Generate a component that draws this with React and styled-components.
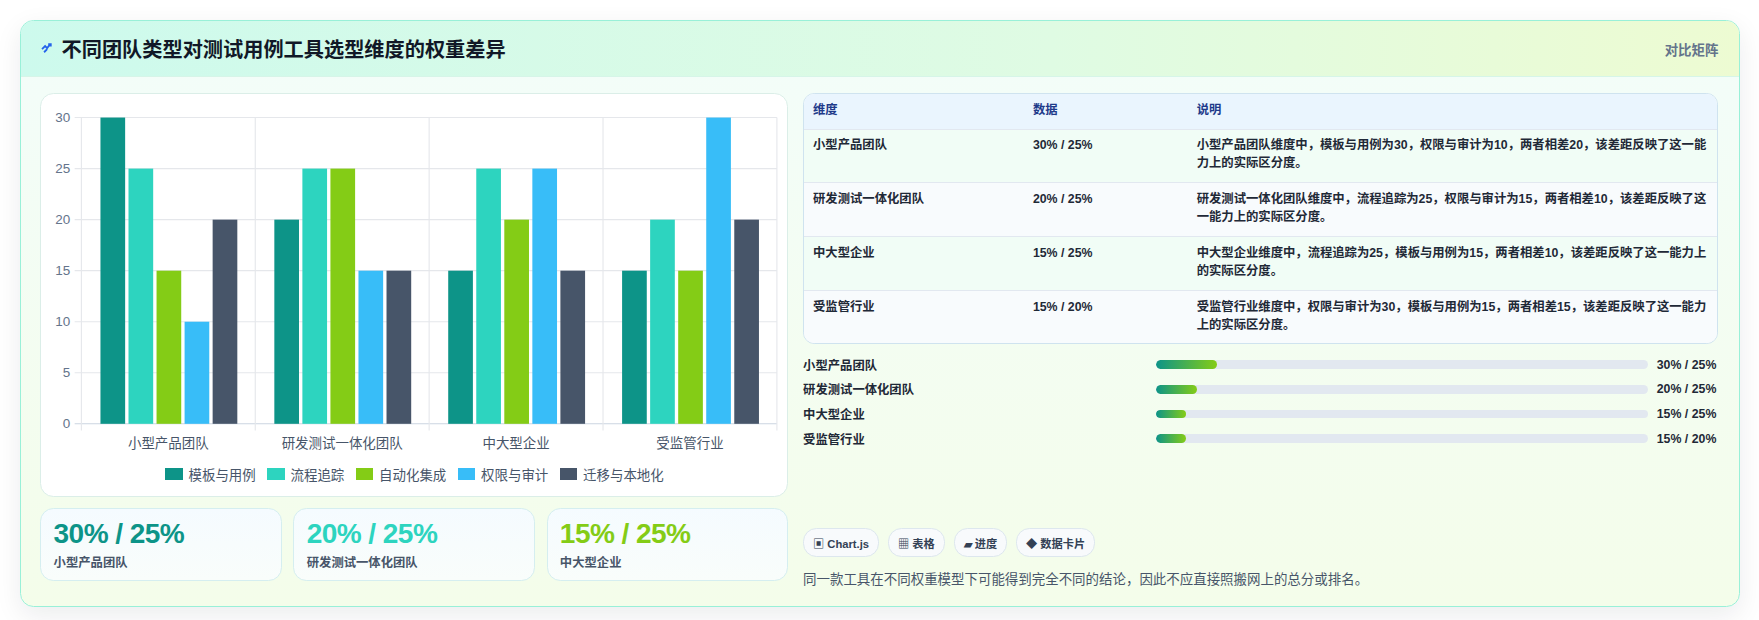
import React from 'react';
import styled, { createGlobalStyle } from 'styled-components';

const Global = createGlobalStyle`
  body { margin: 0; background: #fff; font-family: "Liberation Sans", "Noto Sans CJK SC", sans-serif; }
`;

const groups = ['小型产品团队', '研发测试一体化团队', '中大型企业', '受监管行业'];
const series = [
  { name: '模板与用例', color: '#0d9488', data: [30, 20, 15, 15] },
  { name: '流程追踪', color: '#2dd4bf', data: [25, 25, 25, 20] },
  { name: '自动化集成', color: '#84cc16', data: [15, 25, 20, 15] },
  { name: '权限与审计', color: '#38bdf8', data: [10, 15, 25, 30] },
  { name: '迁移与本地化', color: '#475569', data: [20, 15, 15, 20] },
];
const rows = [
  ['小型产品团队', '30% / 25%', '小型产品团队维度中，模板与用例为30，权限与审计为10，两者相差20，该差距反映了这一能力上的实际区分度。', 12.4],
  ['研发测试一体化团队', '20% / 25%', '研发测试一体化团队维度中，流程追踪为25，权限与审计为15，两者相差10，该差距反映了这一能力上的实际区分度。', 8.2],
  ['中大型企业', '15% / 25%', '中大型企业维度中，流程追踪为25，模板与用例为15，两者相差10，该差距反映了这一能力上的实际区分度。', 6],
  ['受监管行业', '15% / 20%', '受监管行业维度中，权限与审计为30，模板与用例为15，两者相差15，该差距反映了这一能力上的实际区分度。', 6],
];

const Page = styled.div`
  zoom: 1.1218;
  padding: 18px 9px 18px 18px;
  height: 553px;
  box-sizing: border-box;
`;
const Card = styled.div`
  width: 1531px;
  border: 1px solid #99f0d8;
  border-radius: 12px;
  overflow: hidden;
  background: linear-gradient(180deg, #f3fdfa 0%, #f4fdea 100%);
  box-shadow: 0 8px 24px rgba(15, 23, 42, 0.08);
`;
const Header = styled.div`
  height: 49px;
  display: flex;
  align-items: center;
  justify-content: space-between;
  padding: 0 18px;
  background: linear-gradient(90deg, #cdfaed 0%, #dffbe3 60%, #edfbd2 100%);
  border-bottom: 1px solid #d6f5e8;
`;
const Title = styled.h1`
  margin: 0;
  font-size: 18px;
  font-weight: 700;
  color: #111827;
  display: flex;
  align-items: center;
  gap: 7px;
`;
const Tag = styled.div`
  font-size: 12px;
  font-weight: 700;
  color: #64748b;
`;
const Body = styled.div`
  display: grid;
  grid-template-columns: 667px 816px;
  gap: 13px;
  padding: 14px 17px 16px 17px;
`;
const Col = styled.div`
  display: flex;
  flex-direction: column;
`;
const ChartBox = styled.div`
  height: 360px;
  background: #fff;
  border: 1px solid #dbeee8;
  border-radius: 12px;
  display: flex;
  flex-direction: column;
  height: 360px;
  box-sizing: border-box;
`;
const Legend = styled.div`
  display: flex;
  justify-content: center;
  gap: 10px;
  font-size: 12px;
  color: #475569;
`;
const LegendItem = styled.div`
  display: flex;
  align-items: center;
  gap: 5px;
  i { width: 16px; height: 11px; background: ${(p) => p.$c}; display: block; }
`;
const Stats = styled.div`
  display: grid;
  grid-template-columns: repeat(3, 1fr);
  gap: 10px;
  margin-top: 10px;
`;
const Stat = styled.div`
  height: 65px;
  box-sizing: border-box;
  border: 1px solid #d5eef0;
  border-radius: 12px;
  background: linear-gradient(180deg, #f5fbff, #f9fdfb);
  padding: 8px 11px;
`;
const StatNum = styled.div`
  font-size: 25px;
  font-weight: 700;
  letter-spacing: -0.5px;
  color: ${(p) => p.$c};
`;
const StatLabel = styled.div`
  font-size: 11px;
  color: #475569;
  margin-top: 3px;
  font-weight: 700;
`;
const Table = styled.div`
  border: 1px solid #cfe3ef;
  border-radius: 10px;
  overflow: hidden;
  background: #fff;
`;
const Row = styled.div`
  display: grid;
  grid-template-columns: 196px 146px 1fr;
  padding: 7px 8px 8px;
  font-size: 11px;
  font-weight: 700;
  color: ${(p) => (p.$head ? '#1e3a8a' : '#1f2937')};
  background: ${(p) => (p.$head ? '#eaf5fe' : p.$odd ? '#f8fbfd' : '#f1fdf6')};
  border-top: ${(p) => (p.$head ? 'none' : '1px solid #e2e8f0')};
  line-height: 16px;
  min-height: ${(p) => (p.$head ? '16px' : '31px')};
`;
const Bars = styled.div`
  display: flex;
  flex-direction: column;
  gap: 6px;
  margin-top: 10px;
`;
const BarRow = styled.div`
  display: grid;
  grid-template-columns: 315px 438px 1fr;
  align-items: center;
  font-size: 11px;
  font-weight: 700;
  color: #1f2937;
  height: 16px;
`;
const Track = styled.div`
  height: 8px;
  border-radius: 4px;
  background: #e2e8f0;
  overflow: hidden;
`;
const Fill = styled.div`
  height: 100%;
  border-radius: 4px;
  background: linear-gradient(90deg, #0d9488, #84cc16);
`;
const BarVal = styled.div`
  padding-left: 8px;
`;
const Chips = styled.div`
  display: flex;
  gap: 8px;
  margin-top: 72px;
`;
const Chip = styled.div`
  height: 24px;
  padding: 0 8px;
  display: flex;
  align-items: center;
  border: 1px solid #dde7ee;
  border-radius: 12px;
  background: #f8fafc;
  font-size: 10px;
  font-weight: 700;
  color: #334155;
`;
const Note = styled.div`
  margin-top: 10px;
  font-size: 12px;
  color: #475569;
`;

function Chart() {
  const x0 = 36, y0 = 294, h = 273, gw = 155;
  const ticks = [0, 5, 10, 15, 20, 25, 30];
  return (
    <svg width="665" height="330" style={{ display: 'block' }}>
      {ticks.map((t) => {
        const y = y0 - (t / 30) * h;
        return (
          <g key={t}>
            <line x1={x0 - 6} x2={656} y1={y} y2={y} stroke={t === 0 ? '#cbd5e1' : '#e5e7eb'} />
            <text x={x0 - 10} y={y + 4} fontSize="12" fill="#64748b" textAnchor="end">{t}</text>
          </g>
        );
      })}
      {[0, 1, 2, 3, 4].map((i) => (
        <line key={i} x1={x0 + i * gw} x2={x0 + i * gw} y1={y0 - h} y2={y0 + 6} stroke="#e5e7eb" />
      ))}
      {groups.map((g, gi) => (
        <g key={g}>
          {series.map((s, si) => {
            const bh = (s.data[gi] / 30) * h;
            return <rect key={si} x={x0 + gi * gw + 17 + si * 25} y={y0 - bh} width="22" height={bh} fill={s.color} />;
          })}
          <text x={x0 + gi * gw + gw / 2} y={y0 + 22} fontSize="12" fill="#475569" textAnchor="middle">{g}</text>
        </g>
      ))}
    </svg>
  );
}

export default function App() {
  const colors = ['#0d9488', '#2dd4bf', '#84cc16'];
  return (
    <Page>
      <Global />
      <Card>
        <Header>
          <Title>
            <svg width="11" height="11" viewBox="0 0 12 12">
              <path d="M1 7 L4 4 L6 6 L9 2 M7 2 H9.5 V4.5 M3 10 L6 7" stroke="#2563eb" strokeWidth="1.8" fill="none" />
            </svg>
            不同团队类型对测试用例工具选型维度的权重差异
          </Title>
          <Tag>对比矩阵</Tag>
        </Header>
        <Body>
          <Col>
            <ChartBox>
              <Chart />
              <Legend>
                {series.map((s) => (
                  <LegendItem key={s.name} $c={s.color}><i />{s.name}</LegendItem>
                ))}
              </Legend>
            </ChartBox>
            <Stats>
              {rows.slice(0, 3).map((r, i) => (
                <Stat key={r[0]}>
                  <StatNum $c={colors[i]}>{r[1]}</StatNum>
                  <StatLabel>{r[0]}</StatLabel>
                </Stat>
              ))}
            </Stats>
          </Col>
          <Col>
            <Table>
              <Row $head><div>维度</div><div>数据</div><div>说明</div></Row>
              {rows.map((r, i) => (
                <Row key={r[0]} $odd={i % 2 === 1}><div>{r[0]}</div><div>{r[1]}</div><div>{r[2]}</div></Row>
              ))}
            </Table>
            <Bars>
              {rows.map((r) => (
                <BarRow key={r[0]}>
                  <div>{r[0]}</div>
                  <Track><Fill style={{ width: `${r[3]}%` }} /></Track>
                  <BarVal>{r[1]}</BarVal>
                </BarRow>
              ))}
            </Bars>
            <Chips>
              <Chip>▣ Chart.js</Chip>
              <Chip>▦ 表格</Chip>
              <Chip>▰ 进度</Chip>
              <Chip>◆ 数据卡片</Chip>
            </Chips>
            <Note>同一款工具在不同权重模型下可能得到完全不同的结论，因此不应直接照搬网上的总分或排名。</Note>
          </Col>
        </Body>
      </Card>
    </Page>
  );
}
